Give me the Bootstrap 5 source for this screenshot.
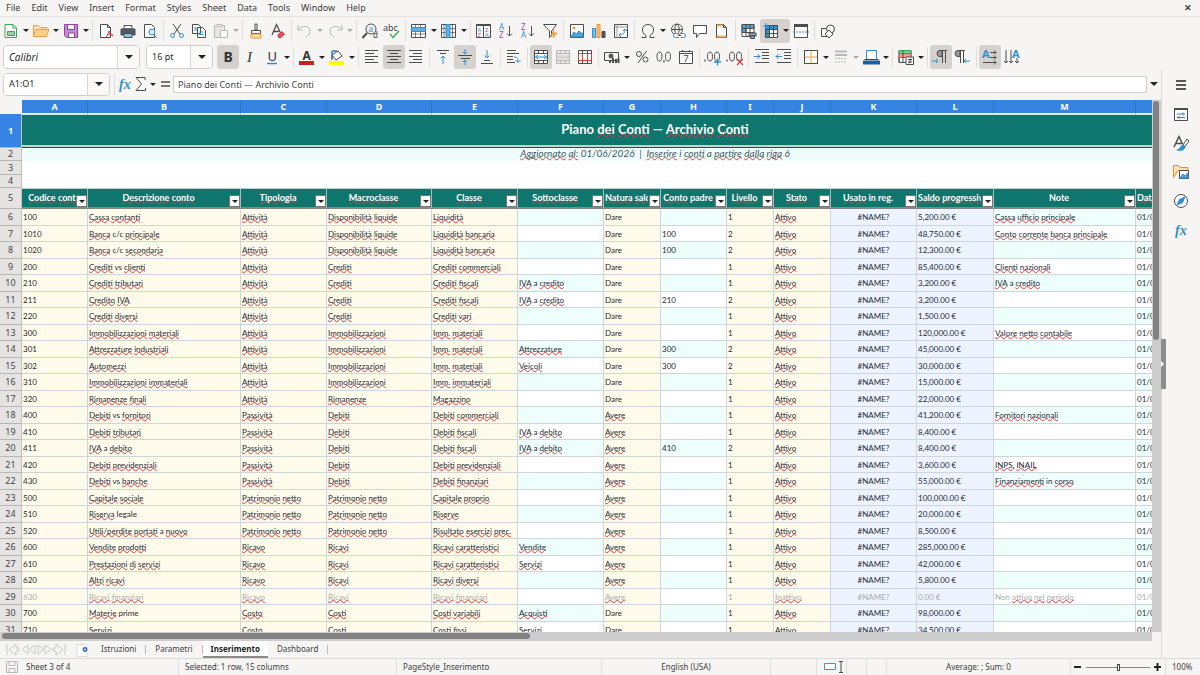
<!DOCTYPE html>
<html lang="it">
<head>
<meta charset="utf-8">
<meta name="viewport" content="width=device-width, initial-scale=1">
<title>Piano dei Conti</title>
<link href="https://cdn.jsdelivr.net/npm/bootstrap@5.3.0/dist/css/bootstrap.min.css" rel="stylesheet">
<style>
  :root { --ui:#f6f5f4; --line:#dcdad8; --teal:#0f766e; --blue:#3584e4; }
  body { background:var(--ui); color:#3d3d3d; font:9px/12px "Noto Sans",sans-serif; }
  button { font:inherit; color:inherit; background:none; border:0; padding:0; }
  svg { display:block; fill:none; stroke:#4d4d4d; }
  .menus { height:17px; padding-left:6px; gap:11px; border-bottom:1px solid #e6e4e2; }
  .menus a { color:inherit; text-decoration:none; }
  .tools { height:27px; }
  .tools.second { height:26px; }
  .tool { width:22px; height:24px; display:flex; align-items:center; justify-content:center; border-radius:3px; }
  .tool svg { width:16px; height:16px; overflow:visible; }
  .drop { width:8px; height:24px; display:flex; align-items:center; justify-content:center; }
  .drop::after, .combo button::after, .expand::after { content:""; border:3px solid transparent; border-top-color:#222; border-bottom:0; }
  .combo button, .expand { display:flex; align-items:center; justify-content:center; }
  .combo button::after, .expand::after { border-width:4px 4px 0; }
  .pressed { background:#d5d1cd; }
  .split.pressed { border-radius:3px; }
  .off { opacity:.35; }
  .rule { width:5px; height:21px; display:flex; justify-content:center; }
  .rule::after { content:""; width:1px; background:#e0dedc; }
  .combo { height:24px; border:1px solid #cfccc9; border-radius:4px; background:#fff; overflow:hidden; }
  .combo input { border:0; outline:0; width:0; min-width:0; padding:0 0 0 5px; color:#2b2b2b; font-size:9px; }
  .combo input.fst-italic { font-size:10px; }
  .combo button { width:22px; flex-shrink:0; border-left:1px solid #d8d5d2; background:#faf9f8; }
  .font-box { width:137px; margin:0 6px 0 3px; } .size-box { width:67px; } .name-box { width:107px; height:23px; margin:0 2px 0 3px; }
  .formula { height:28px; margin-bottom:2px; }
  .formula .tool { width:16px; }
  .formula-line { height:17px; border:1px solid #cfccc9; background:#fff; padding:0 4px; outline:0; color:#444; }
  .expand { width:14px; height:17px; }
  .sheet-area { background:#fff; }
  table.sheet { table-layout:fixed; width:1288px; border-collapse:separate; border-spacing:0; font:8px/12px Lato,sans-serif; color:#1f2937; }
  .sheet th, .sheet td { padding:0 1px; white-space:nowrap; overflow:hidden; height:16px; }
  .sheet tbody.data tr:nth-child(odd) > * { height:17px; }
  .sheet .colhead th { height:14px; background:var(--blue); color:#fff; font:bold 9px/12px "Noto Sans",sans-serif; text-align:center; border-right:1px solid #2f76cd; border-bottom:1px solid #fff; }
  .sheet .colhead th:first-child { background:var(--ui); border:0; }
  .sheet .rownum { background:#e5e4e3; color:#444; font:9px/12px "Noto Sans",sans-serif; text-align:center; border-right:1px solid #c4c2c0; border-bottom:1px solid #b9b7b5; }
  .sheet .r1 > * { height:34px; } .sheet .r1 .rownum { background:var(--blue); color:#fff; font-weight:bold; }
  .sheet .r2 > *, .sheet .r4 > * { height:13px; } .sheet .r3 > * { height:14px; } .sheet .r5 > * { height:21px; }
  .sheet .title { background:var(--teal); color:#fff; font:bold 13px/18px Lato,sans-serif; text-align:center; padding-bottom:3px; border-bottom:1px solid #444; box-shadow:inset 0 -2px #cfcfcf, inset 0 1px #cfe3e1; }
  .sheet .subtitle { background:#eefffb; font-style:italic; font-size:10px; line-height:11px; padding-bottom:2px; color:#4b5563; text-align:center; }
  .sheet .field { position:relative; background:var(--teal); color:#fff; font:bold 9px/12px Lato,sans-serif; text-align:center; border-right:1px solid #9cc0bc; border-bottom:2px solid #868686; border-top:1px solid #b9d2cf; }
  .field .label-text { display:block; overflow:hidden; margin-right:11px; }
  .field:nth-child(2) .label-text { margin-right:0; }
  .field button { position:absolute; right:0; bottom:0; width:11px; height:12px; background:#fff; border:1px solid #777; display:flex; align-items:center; justify-content:center; }
  .field button::after { content:""; border:3px solid transparent; border-top-color:#222; border-bottom:0; }
  .data td { border-right:1px solid #cfd5dc; border-bottom:1px solid #cfd5dc; }
  .data tr:nth-child(odd) td { background:#eefffb; }
  .data tr:nth-child(even) td { background:#fff; }
  .data tr td.entry { background:#fffbeb; }
  .data tr td.calc { background:#edf4ff; }
  .data tr.inactive td { color:#a7abb3; }
  .sp { text-decoration:underline wavy #e23b3b 1px; text-underline-offset:-1px; text-decoration-skip-ink:none; }
  .vbar { width:9px; background:#cdcdcd; padding:1px; }
  .vbar div { width:6px; height:45%; background:#818181; border-radius:3px; }
  .hbar { height:9px; background:#cdcdcd; padding:1px 2px; margin-right:9px; }
  .hbar div { width:46%; height:6px; background:#818181; border-radius:3px; }
  .tabs { height:17px; font-size:8px; }
  .tabs button { height:17px; border-bottom:2px solid transparent; padding:0 9px; }
  .tabs .current { background:#fff; font-weight:bold; border-color:#8b8b8b; color:#222; padding:0 8px; }
  .tabs i { width:1px; height:9px; background:#bbb; }
  .side { width:39px; border-left:1px solid var(--line); position:relative; }
  .side .tool { height:29px; width:100%; }
  .grip { position:absolute; left:-1px; top:269px; width:5px; height:50px; background:#8d8d8d; display:flex; align-items:center; }
  .grip::after { content:""; border:3px solid transparent; border-left-color:#fff; border-right:0; }
  .status { height:17px; border-top:1px solid var(--line); font-size:8px; display:grid; flex-shrink:0;
    grid-template-columns:minmax(0,179fr) minmax(0,218fr) minmax(0,205fr) minmax(0,169fr) minmax(0,46fr) minmax(0,30fr) minmax(0,20fr) minmax(0,20fr) minmax(0,184fr) minmax(0,95fr) minmax(0,34fr); }
  .status > div { display:flex; align-items:center; white-space:nowrap; padding-left:6px; border-right:1px solid #e2e0de; }
  .status > .mid { justify-content:center; padding:0; }
  .zoomer { appearance:none; width:64px; height:9px; background:linear-gradient(#888,#888) center/100% 1px no-repeat; }
  .zoomer::-webkit-slider-thumb { appearance:none; width:3px; height:7px; border:1px solid #444; background:#fff; }
</style>
</head>
<body>
<div class="vh-100 d-flex flex-column overflow-hidden">
  <nav class="menus d-flex align-items-center flex-shrink-0" id="menus"></nav>
  <div class="tools d-flex align-items-center flex-shrink-0" id="bar1" role="toolbar"></div>
  <div class="tools second d-flex align-items-center flex-shrink-0" role="toolbar">
    <div class="combo font-box d-flex flex-shrink-0"><input class="flex-grow-1 fst-italic" value="Calibri" aria-label="Font"><button aria-label="Fonts"></button></div>
    <div class="combo size-box d-flex flex-shrink-0 me-1"><input class="flex-grow-1" value="16 pt" aria-label="Size"><button aria-label="Sizes"></button></div>
    <div class="d-flex align-items-center" id="bar2"></div>
  </div>
  <div class="d-flex flex-grow-1" style="min-height:0">
    <div class="d-flex flex-column flex-grow-1" style="min-width:0">
      <div class="formula d-flex align-items-center flex-shrink-0">
        <div class="combo name-box d-flex flex-shrink-0"><input class="flex-grow-1" value="A1:O1" aria-label="Name box"><button aria-label="Names"></button></div>
        <div class="d-flex align-items-center" id="bar3"></div>
        <input class="formula-line flex-grow-1" value="Piano dei Conti — Archivio Conti" aria-label="Formula">
        <button class="expand" aria-label="Expand"></button>
      </div>
      <div class="d-flex flex-grow-1" style="min-height:0">
        <div class="sheet-area flex-grow-1 overflow-hidden">
          <table class="sheet"><colgroup id="cols"></colgroup>
            <thead id="head"></thead><tbody class="data" id="rows"></tbody></table>
        </div>
        <div class="vbar flex-shrink-0"><div></div></div>
      </div>
      <div class="hbar flex-shrink-0"><div></div></div>
      <div class="tabs d-flex align-items-center flex-shrink-0">
        <svg class="ms-1" width="64" height="13" viewBox="0 0 64 13" style="stroke:#c9c7c5"><path d="M3 1v11M12 1 5 6.500l7 5.500V8h3V5h-3zM24 2l-6 4.500 6 4.500zM31 2l-6 4.500 6 4.500zM34 2l6 4.500-6 4.500zM41 2l6 4.500-6 4.500zM61 1v11M52 1l7 5.500-7 5.500V8h-3V5h3z"/></svg>
        <svg class="ms-2" width="16" height="14" viewBox="0 0 16 14"><path d="M1 1.500h8l2 2v10H1z" fill="#fff" stroke="#dddbd9"/><circle cx="9" cy="6.500" r="1.700" fill="#fff" stroke="#2a62b8" stroke-width="1.500"/></svg>
        <button>Istruzioni</button><i></i><button>Parametri</button><i></i><button class="current">Inserimento</button><button>Dashboard</button><i></i>
      </div>
    </div>
    <div class="side flex-shrink-0"><div id="side"></div><button class="grip" aria-label="Hide sidebar"></button></div>
  </div>
  <footer class="status">
    <div><svg class="me-2 off" width="12" height="12" viewBox="0 0 12 12"><path d="M.5.500h11v11H.5zM3 .5v4h6v-4M3 11.500v-4h6v4"/></svg>Sheet 3 of 4</div>
    <div>Selected: 1 row, 15 columns</div>
    <div>PageStyle_Inserimento</div>
    <div class="mid">English (USA)</div>
    <div></div>
    <div><svg width="20" height="12" viewBox="0 0 20 12"><path d="M1.500 2.500h11v6h-11z" stroke="#3f94c9" fill="#fff"/><path d="M16 .5h4M18 .5v11M16 11.500h4"/></svg></div>
    <div></div><div></div>
    <div class="mid">Average: ; Sum: 0</div>
    <div class="mid gap-1"><svg width="8" height="8"><path d="M0 4h7" stroke="#222" stroke-width="2"/></svg><input class="zoomer" type="range" aria-label="Zoom"><svg width="8" height="8"><path d="M0 4h7M3.500 0v8" stroke="#222" stroke-width="2"/></svg></div>
    <div class="border-0">100%</div>
  </footer>
</div>
<script>
const B='stroke="#2f8fd0"', page='<path d="M2.500 1.500h7l3 3v10h-10z" fill="#fff"/>';
const grid='<path d="M.5 1.500h14v13H.5z" fill="#fff"/>', gl='<path d="M.5 5.500h14M.5 9.500h14M4.500 1.500v13M9.500 1.500v13"/>';
const t=(x,y,s,c,sz,w)=>`<text x="${x}" y="${y}" fill="${c}" stroke="none" font-size="${sz}" font-family="Noto Sans" ${w||''}>${s}</text>`;
const lines=(a)=>`<path d="${a}"/>`;
const zero=(x)=>`<ellipse cx="${x}" cy="7.500" rx="2.500" ry="4.500"/>`;
const ic={
 New:'<path d="M2 1.500h8l3.500 3.500v9.500H2z" fill="#fff" stroke="#3aa757" /><path d="M4.500 8.500h7v4h-7z" fill="#8ed3a0" stroke="#3aa757"/><path d="M10 1.500V5h3.500" stroke="#3aa757"/>',
 Open:'<path d="M.5 13.500v-11h5l1.500 2h7v2" fill="#fde0b4" stroke="#eda13c"/><path d="M.5 13.500 3 6.500h13l-2.500 7z" fill="#fcd08c" stroke="#eda13c"/>',
 Save:'<path d="M1.500 1.500h13v13h-11l-2-2z" fill="#c68bd8" stroke="#94409f"/><path d="M4.500 1.500h7v5h-7zM5.500 14v-4h6v4" fill="#fff" stroke="#94409f"/>',
 PDF:page+'<path d="M9.500 1.500v3h3"/><path d="M8 14c2-2 3-5 3-6m0 0c0 3 2 4 4 5m-6-1c2-1 4-1 6 0" stroke="#dc3d4a"/>',
 Print:'<path d="M4 2.500h8V6H4z" fill="#fff"/><path d="M1 6h14v6H1z" fill="#4d5e6b"/><path d="M4 10.500h8v4H4z" fill="#8bc2e8"/>',
 Preview:page+'<circle cx="10" cy="9" r="3" fill="#d5ebf9" '+B+'/><path d="m12 12 3 3" '+B+'/>',
 Cut:'<path d="M4 1l7 10M12 1 5 11"/><circle cx="3.500" cy="12.500" r="2" '+B+'/><circle cx="12.500" cy="12.500" r="2" '+B+'/>',
 Copy:'<path d="M1.500 1.500h6l2 2v7h-8zM6.500 4.500h5l3 3v7h-8z" fill="#fff"/><path d="M3 5h3M3 7h3M8.500 9h4M8.500 11.500h4" '+B+'/>',
 Paste:'<path d="M1.500 2.500h10v12h-10z" fill="#ccc"/><path d="M4 1.500h5v2H4zM7.500 7.500h7v7h-7z" fill="#fff"/>',
 Clone:'<path d="M7 1h2v6H7zM3.500 7.500h9v3h-9z" fill="#fff"/><path d="M3 11h10v4H3z" fill="#f9dcae" stroke="#e8962a"/>',
 Clear:'<path d="M2 12 6.500 1.500 10 9M4 8.500h5" stroke-width="1.300"/><path d="m8 12 3.500-3.500 3 2.500-3.500 3.500-2.500 0z" fill="#e8505a" stroke="#c8303c"/>',
 Undo:'<path d="M1 2v5h5M1 7c3-5 12-5 12 1 0 3-2 4-4 6"/>', Redo:'<path d="M15 2v5h-5M15 7C12 2 3 2 3 8c0 3 2 4 4 6"/>',
 Find:'<circle cx="9" cy="6" r="5"/><path d="m5 10-4.500 5" stroke-width="2"/>'+t(6.5,8.5,'a','#2f8fd0',8)+t(11,15,'d','#444',8),
 Spelling:t(-1,8,'abc','#444',9)+'<path d="m6 11 3 3.500L15 8" stroke="#3aa757" stroke-width="1.300"/>',
 Row:grid+'<path d="M.5 5.500h14M.5 11h14M4.500 1.500v13M9.500 1.500v13" stroke-width=".7"/><path d="M.5 4.500h14v4H.5z" fill="#5fb0ea" '+B+'/>',
 Column:grid+'<path d="M.5 5.500h14M.5 9.500h14M3 1.500v13M11.500 1.500v13" stroke-width=".7"/><path d="M5 1.500h4v13H5z" fill="#5fb0ea" '+B+'/>',
 Sort:'<path d="M.5 1.500h14v13H.5z" fill="#fff"/><path d="M.5 2h14" stroke-width="2"/><path d="M7.500 2v12"/>'+t(1.5,8.5,'A','#2f8fd0',6)+t(1.5,14,'Z','#a548b8',6)+t(9,8.5,'Z','#a548b8',6)+t(9,14,'A','#2f8fd0',6),
 Ascending:t(1,7,'A','#2f8fd0',8)+t(1,15,'Z','#a548b8',8)+'<path d="M11.500 3v10M9 10.500l2.500 2.500 2.500-2.500"/>',
 Descending:t(1,7,'Z','#a548b8',8)+t(1,15,'A','#2f8fd0',8)+'<path d="M11.500 3v10M9 10.500l2.500 2.500 2.500-2.500"/>',
 Filter:'<path d="M1.500 1.500h13L9.500 8v5l-2 1.500V8z" fill="#fff"/><path d="m12 7-3 5h3l-1 3 4-5h-3z" fill="#f5a742" stroke="#f08c1a" stroke-width=".6"/>',
 Image:'<path d="M1.500 1.500h13v13h-13z" fill="#fff"/><circle cx="5" cy="5" r="1" fill="#f5a742" stroke="#f08c1a"/><path d="m2 14 3-5 2.500 2L10 8l4 3v3z" fill="#4da4dc" '+B+'/>',
 Chart:'<path d="M1.500 5.500h3v9h-3z" fill="#7fc0ee" '+B+'/><path d="M6 1.500h3v13H6z" fill="#f9c27a" stroke="#e8912a"/><path d="M11 8.500h3v6h-3z" fill="#555"/>',
 Pivot:'<path d="M1.500 1.500h13v13h-13z" fill="#fff"/><path d="M1.500 4h13M4 1.500v13" stroke="#999"/><path d="M6 12c4 0 6-2 6-6M10 8l2-2 2 2M8 14l-2-2 2-2" '+B+'/>',
 Symbol:'<path d="M1.500 14.500H6v-2C.5 9.500 1.500 1.500 8 1.500s7.500 8 2 11v2h4.500"/>',
 Link:'<circle cx="7" cy="6.500" r="5.500"/><path d="M1.500 6.500h11M7 1c-3 3-3 8 0 11M7 1c3 3 3 8 0 11"/><path d="M8 10.500H5.500a2 2 0 0 0 0 4H9M10 10.500h3.500a2 2 0 0 1 0 4H11M7.500 12.500h4" fill="#fff" '+B+'/>',
 Comment:'<path d="M1.500 2.500h13v8h-7l-3 4v-4h-3z" fill="#fff"/>',
 Header:page+'<path d="M3 2.500h6M3 13.500h9" stroke="#f5b469" stroke-width="2"/><path d="M9.500 1.500v3h3"/>',
 Area:'<path d="M1 1.500h12v12H1z" fill="#fff"/><path d="M1 1.500h12v4H1zM1 5.500h4v4H1z" fill="#4da4dc"/><path d="M1 9.500h12M5 1.500v12M9 1.500v12"/><path d="M8 10h7v3H8zM9.500 12.500h4v3h-4z" fill="#7fb4d8"/>',
 Freeze:'<path d="M2.500 2.500h12v12h-12z" fill="#fff"/><path d="M2.500 2.500h12v4h-12zM2.500 6.500h4v8h-4z" fill="#2f8fd0"/><path d="M2.500 10.500h12M6.500 2.500v12M10.500 2.500v12"/><path d="M3 0v6M0 3h6" '+B+'/>',
 Split:'<path d="M1.500 1.500h13v13h-13z" fill="#fff"/><path d="M1 2.500h14" stroke-width="3"/><path d="M0 9h16" stroke-dasharray="2 1" '+B+'/>',
 Shapes:'<path d="M1.500 5.500h8v8h-8z"/><circle cx="10.500" cy="6" r="4" fill="#f6f5f4"/><path d="m9 7 4 4-4 4-4-4z" fill="#f6f5f4"/>',
 Bold:t(3.5,13,'B','#333',14,'font-weight="bold"'), Italic:t(5,13,'I','#333',15,'font-style="italic" style="font-family:Liberation Serif"'),
 Underline:t(3.5,12,'U','#333',13)+'<path d="M3 14.500h10" stroke-width="1.500" '+B+'/>',
 Color:t(3.5,11,'A','#333',12,'font-weight="bold"')+'<path d="M0 14h15" stroke="#c9211e" stroke-width="4"/>',
 Highlight:'<path d="m3 6 6-4 4 5-6 4zM3 6v5" fill="#fff" /><path d="M3 2v8M3 2h5" stroke="#2a7fb8" stroke-width="1.500"/><path d="M0 14h15" stroke="#ff0" stroke-width="4"/>',
 Left:lines('M1 1.500h13M1 4.500h9M1 7.500h13M1 10.500h9M1 13.500h13'), Center:lines('M1 1.500h14M4 4.500h8M1 7.500h14M4 10.500h8M1 13.500h14'), Right:lines('M1 1.500h13M5 4.500h9M1 7.500h13M5 10.500h9M1 13.500h13'),
 Top:lines('M2 1.500h12M5 4.500h6')+'<path d="M8 15V7M5.500 9.500 8 7l2.500 2.500" '+B+'/>',
 Middle:lines('M1 6.500h14M4 9.500h9')+'<path d="M8 0v5M6 3l2 2 2-2M8 16v-5M6 13l2-2 2 2" '+B+'/>',
 Bottom:lines('M2 14.500h12M5 11.500h6')+'<path d="M8 1v8M5.500 6.500 8 9l2.500-2.500" '+B+'/>',
 Wrap:lines('M1 1.500h9M1 4.500h12M1 7.500h6M1 10.500h6M1 13.500h8')+'<path d="M8 8c4 0 4 2 4 5M9.500 11l2.500 2.500L14.500 11" '+B+'/>',
 Merge:'<path d="M1.500 1.500h13v13h-13zM1.500 4.500h13M1.500 11.500h13M5.500 1.500v3M10.500 1.500v3M5.500 11.500v3M10.500 11.500v3" fill="#fff"/><path d="M2.500 8h11M5 6 2.500 8 5 10M11 6l2.500 2L11 10" '+B+'/>',
 MergeC:'<path d="M1.500 1.500h13v13h-13zM1.500 4.500h13M1.500 11.500h13M5.500 1.500v3M10.500 1.500v3M5.500 11.500v3M10.500 11.500v3" fill="#ccc"/><path d="M2 8h12" stroke="#999" stroke-width="3"/>',
 Unmerge:'<path d="M1.500 1.500h13v13h-13z" fill="#fff"/><path d="M5.500 1.500v3M10.500 1.500v3M5.500 11.500v3M10.500 11.500v3"/><path d="M1.500 4.500h13v7h-13zM5.500 4.500v7M10.500 4.500v7" stroke="#dc3d3d"/>',
 Currency:'<path d="M.5 3.500h14v8H.5z"/><circle cx="7" cy="7" r="2" fill="#555"/><path d="M6 14v-3M9 14v-5M12 14v-4M14.500 14V9" stroke-width="2"/>',
 Percent:'<circle cx="5" cy="5" r="2.500"/><circle cx="11.500" cy="10.500" r="2.500"/><path d="M12.500 2 4 14"/>',
 Number:zero(3.5)+zero(12)+'<path d="M8 11v2.500" stroke-width="1.300"/>',
 Date:'<path d="M1.500 2.500h13v12h-13zM1.500 4.500h13M4.500 1v2M11.500 1v2" fill="#fff"/>'+t(5.5,13,'7','#444',9),
 AddDec:zero(5)+zero(12)+'<path d="M0 10.500v2" stroke-width="1.300"/><path d="M9 13h7M12.500 9.500v7" stroke-width="1.300" '+B+'/>',
 DelDec:zero(5)+zero(12)+'<path d="M0 10.500v2" stroke-width="1.300"/><path d="m10 10 6 6M16 10l-6 6" stroke="#e03c3c" stroke-width="1.300"/>',
 Indent:lines('M1 .5h14M8 3.500h7M8 6.500h7M8 9.500h7M1 13.500h14')+'<path d="M0 7.500h6M3.500 5 6 7.500 3.500 10" '+B+'/>',
 Outdent:lines('M1 .5h14M8 3.500h7M8 6.500h7M8 9.500h7M1 13.500h14')+'<path d="M0 7.500h6M2.500 5 0 7.500 2.500 10" '+B+'/>',
 Borders:'<path d="M1.500 1.500h13v13h-13z" fill="#fff"/><path d="M8 2v12M2 8h12" stroke="#eda13c"/><path d="M1.500 1.500h13v13h-13z"/>',
 Style:'<path d="M2 2.500h12M2 6h12" stroke-width="2"/><path d="M2 9.500h12M2 13h12" stroke-dasharray="2 1"/>',
 LineColor:'<path d="M3.500 1.500h10v9h-10z" fill="#fff" stroke="#2f8fd0"/><path d="M1.500 10.500h14" stroke="#444"/><path d="M0 13.500h17" stroke="#205d9c" stroke-width="4"/>',
 Conditional:'<path d="M1 1.500h12v12H1z" fill="#fff"/><path d="M1 1.500h12v3H1z" fill="#7bcf8f" stroke="#3aa757"/><path d="M1 4.500h12v4H1z" fill="#f29a8c" stroke="#d9533f"/><path d="M1 8.500v5h7M5 1.500v12"/><path d="M8 8h7.500v7.500H8zM10 10.500h4M10 13h4M13 9.500l-2 5" fill="#fff"/>',
 LTR:'<path d="M9 1.500H7a3 3 0 0 0 0 6h2zM9.500 14V1.500M12.500 14V1.500M9 1.500h5" fill="#999"/><path d="M-1 12h6M3 10l2 2-2 2" '+B+'/>',
 RTL:'<path d="M5 1.500H3a3 3 0 0 0 0 6h2zM5.500 14V1.500M8.500 14V1.500M5 1.500h5" fill="#999"/><path d="M15 12H9M11 10l-2 2 2 2" '+B+'/>',
 Horizontal:t(0,9,'A','#2f8fd0',11,'font-weight="bold"')+'<path d="M8 3.500h6M12 1.500l2 2-2 2M8 8.500h6M12 6.500l2 2-2 2M1 13.500h13M12 11.500l2 2-2 2"/>',
 Vertical:t(8,9,'A','#2f8fd0',11,'font-weight="bold"')+'<path d="M2 1v13M0 12l2 2 2-2M7 1v13M5 12l2 2 2-2M13 9v5M11 12l2 2 2-2"/>',
 Function:t(2,13,'fx','#2f8fd0',14,'font-style="italic" font-weight="bold" style="font-family:Liberation Serif"'),
 Sum:'<path d="M12 4V1.500H3L8.500 8 3 14.500h9.500V12"/>', Equals:'<path d="M4 6h9M4 10h9" stroke-width="1.500"/>',
 Menu:'<path d="M3 4h10M3 8h10M3 12h10" stroke="#222" stroke-width="1.500"/>',
 Properties:'<path d="M1.500 2.500h13v12h-13z" fill="#fff"/><path d="M1 3h14" stroke-width="2"/><path d="M4 8h8M10 6.500v3M4 11.500h8M6 10v3" '+B+'/>',
 Styles:'<path d="M1 12 6 1.500 9.500 9M3 8.500h6" stroke-width="1.500"/><path d="m14 4-4 6 2 1.500L16 6z" fill="#fff"/><path d="M10 10c-3 1-2 4-6 5 4 1 8 0 8-3.500z" fill="#2f8fd0" '+B+'/>',
 Gallery:'<path d="M.5 13.500v-12h5l1.500 2h8v3h-10z" fill="#fde0b4" stroke="#e8912a"/><path d="M6.500 6.500h9v8h-9z" fill="#fff"/><path d="m7 14 3-4 2 2 3-3v5z" fill="#4da4dc" '+B+'/>',
 Navigator:'<circle cx="8" cy="8" r="6.500" fill="#fff"/><path d="m12 4-2.500 5.500L4 12l2.500-5.500z" fill="#2f8fd0" '+B+'/>'
};
// A toolbar spec: "|" is a separator, "*" pressed, "-" unavailable, ">" has a drop-down.
function bar(id,spec){
  document.getElementById(id).innerHTML=spec.split(' ').map(s=>{
    if(s==='|')return '<span class="rule"></span>';
    const n=s.replace(/[*>-]/g,''),off=s.includes('-')?' off':'',p=s.includes('*')?' pressed':'';
    const b=`<button class="tool${off}${s.includes('>')?'':p}" aria-label="${n}"><svg viewBox="0 0 16 16">${ic[n]}</svg></button>`;
    return s.includes('>')?`<span class="split d-flex${p}">${b}<button class="drop${off}" aria-label="${n} options"></button></span>`:b;
  }).join('');
}
bar('bar1','New> Open> Save> | PDF Print Preview | Cut Copy -Paste> | Clone Clear | -Undo> -Redo> | Find Spelling | Row> Column> | Sort Ascending Descending Filter | Image Chart Pivot | Symbol> Link Comment Header | Area *Freeze> Split | Shapes');
bar('bar2','*Bold Italic Underline> | Color> Highlight> | Left *Center Right | Top *Middle Bottom | Wrap | *Merge -MergeC Unmerge | Currency> Percent Number Date | AddDec DelDec | Indent Outdent | Borders> -Style> LineColor> | Conditional> | *LTR RTL | *Horizontal Vertical');
bar('bar3','| Function Sum> Equals');
bar('side','Menu Properties Styles Gallery Navigator Function');
document.getElementById('menus').innerHTML='File Edit View Insert Format Styles Sheet Data Tools Window Help'.split(' ').map(m=>`<a href="#">${m}</a>`).join('')+'<button class="ms-auto me-2 fw-bold" aria-label="Close">✕</button>';

const known=/^(Piano|Note|Dare|a|c\/c|i|prime|padre|vs|Non|in|reg\.|legale|—|\||[\d.,/€ ]+|#NAME\?)$/;
const mark=s=>s.split(' ').map(w=>!w||known.test(w)?w:`<span class="sp">${w}</span>`).join(' ');
const widths=[22,66,153,86,105,86,86,57,66,47,57,86,77,142,66,86];
cols.innerHTML=widths.map(w=>`<col style="width:${w}px">`).join('');
const fields=['Codice conto','Descrizione conto','Tipologia','Macroclasse','Classe','Sottoclasse','Natura saldo','Conto padre','Livello','Stato','Usato in reg.','Saldo progressivo','Note','Data creazione',''];
head.innerHTML='<tr class="colhead"><th></th>'+[...'ABCDEFGHIJKLMNO'].map(c=>`<th>${c}</th>`).join('')+'</tr>'
 +`<tr class="r1"><th class="rownum">1</th><td class="title" colspan="15">${mark('Piano dei Conti — Archivio Conti')}</td></tr>`
 +`<tr class="r2"><th class="rownum">2</th><td class="subtitle" colspan="15">${mark('Aggiornato al: 01/06/2026')}&nbsp; |&nbsp; ${mark('Inserire i conti a partire dalla riga 6')}</td></tr>`
 +'<tr class="r3"><th class="rownum">3</th><td colspan="15"></td></tr><tr class="r4"><th class="rownum">4</th><td colspan="15"></td></tr>'
 +'<tr class="r5"><th class="rownum">5</th>'+fields.map(f=>`<th class="field"><span class="label-text">${mark(f)}</span><button aria-label="Filter ${f}"></button></th>`).join('')+'</tr>';
const A='Attività',P='Passività',N='Patrimonio netto',DL='Disponibilità liquide',CF='Crediti fiscali',IM='Immobilizzazioni',MM='Imm. materiali';
const data=[
 ['100','Cassa contanti',A,DL,'Liquidità','','Dare','','1','5,200.00','Cassa ufficio principale'],
 ['1010','Banca c/c principale',A,DL,'Liquidità bancaria','','Dare','100','2','48,750.00','Conto corrente banca principale'],
 ['1020','Banca c/c secondaria',A,DL,'Liquidità bancaria','','Dare','100','2','12,300.00',''],
 ['200','Crediti vs clienti',A,'Crediti','Crediti commerciali','','Dare','','1','85,400.00','Clienti nazionali'],
 ['210','Crediti tributari',A,'Crediti',CF,'IVA a credito','Dare','','1','3,200.00','IVA a credito'],
 ['211','Credito IVA',A,'Crediti',CF,'IVA a credito','Dare','210','2','3,200.00',''],
 ['220','Crediti diversi',A,'Crediti','Crediti vari','','Dare','','1','1,500.00',''],
 ['300','Immobilizzazioni materiali',A,IM,MM,'','Dare','','1','120,000.00','Valore netto contabile'],
 ['301','Attrezzature industriali',A,IM,MM,'Attrezzature','Dare','300','2','45,000.00',''],
 ['302','Automezzi',A,IM,MM,'Veicoli','Dare','300','2','30,000.00',''],
 ['310','Immobilizzazioni immateriali',A,IM,'Imm. immateriali','','Dare','','1','15,000.00',''],
 ['320','Rimanenze finali',A,'Rimanenze','Magazzino','','Dare','','1','22,000.00',''],
 ['400','Debiti vs fornitori',P,'Debiti','Debiti commerciali','','Avere','','1','41,200.00','Fornitori nazionali'],
 ['410','Debiti tributari',P,'Debiti','Debiti fiscali','IVA a debito','Avere','','1','8,400.00',''],
 ['411','IVA a debito',P,'Debiti','Debiti fiscali','IVA a debito','Avere','410','2','8,400.00',''],
 ['420','Debiti previdenziali',P,'Debiti','Debiti previdenziali','','Avere','','1','3,600.00','INPS, INAIL'],
 ['430','Debiti vs banche',P,'Debiti','Debiti finanziari','','Avere','','1','55,000.00','Finanziamenti in corso'],
 ['500','Capitale sociale',N,N,'Capitale proprio','','Avere','','1','100,000.00',''],
 ['510','Riserva legale',N,N,'Riserve','','Avere','','1','20,000.00',''],
 ['520','Utili/perdite portati a nuovo',N,N,'Risultato esercizi prec.','','Avere','','1','8,500.00',''],
 ['600','Vendite prodotti','Ricavo','Ricavi','Ricavi caratteristici','Vendite','Avere','','1','285,000.00',''],
 ['610','Prestazioni di servizi','Ricavo','Ricavi','Ricavi caratteristici','Servizi','Avere','','1','42,000.00',''],
 ['620','Altri ricavi','Ricavo','Ricavi','Ricavi diversi','','Avere','','1','5,800.00',''],
 ['630','Ricavi finanziari','Ricavo','Ricavi','Ricavi finanziari','','Avere','','1','0.00','Non attivo nel periodo'],
 ['700','Materie prime','Costo','Costi','Costi variabili','Acquisti','Dare','','1','98,000.00',''],
 ['710','Servizi','Costo','Costi','Costi fissi','Servizi','Dare','','1','34,500.00','']];
rows.innerHTML=data.map((r,i)=>{
  const off=r[0]==='630',c=[...r.slice(0,9),off?'Inattivo':'Attivo','#NAME?',r[9]+' €',r[10],'01/01/2026',''];
  return `<tr class="${off?'inactive':''}"><th class="rownum">${i+6}</th>`+c.map((v,k)=>`<td class="${[0,1,2,3,4,6,8,9].includes(k)?'entry':k===10?'calc text-center':k===11?'calc':''}">${mark(v)}</td>`).join('')+'</tr>';
}).join('');
</script>
<script src="https://cdn.jsdelivr.net/npm/bootstrap@5.3.0/dist/js/bootstrap.bundle.min.js"></script>
</body>
</html>
